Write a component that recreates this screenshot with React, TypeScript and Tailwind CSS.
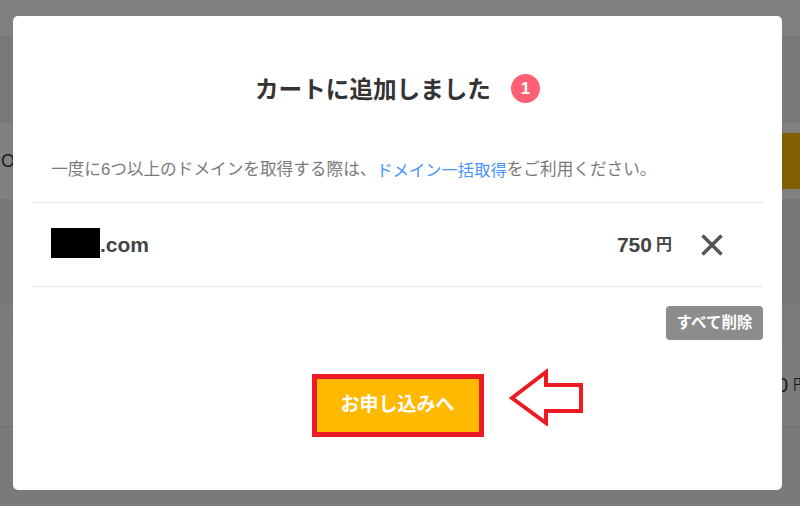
const jp = "font-['Liberation_Sans','Noto_Sans_CJK_JP',sans-serif]";

export default function App() {
  return (
    <div className={`relative h-[506px] w-[800px] overflow-hidden bg-[#7f7f7f] ${jp}`}>
      {/* dimmed page behind the modal */}
      <div className="flex h-full flex-col">
        <div className="h-9 shrink-0 bg-[#808080]" />
        <div className="h-[87px] shrink-0 bg-[#787878]" />
        <div className="flex h-[76px] shrink-0 items-center justify-between bg-[#808080] text-[#0f1a2a]">
          <span className="pl-px text-[18px] leading-none">O</span>
          <div className="h-[56px] w-5 bg-[#7f5f00]" />
        </div>
        <div className="h-[106px] shrink-0 bg-[#777777]" />
        <div className="h-[38px] shrink-0 bg-[#7b7b7b]" />
        <div className="flex h-[84px] shrink-0 items-center justify-end overflow-hidden border-b border-[#707070] bg-[#7c7c7c] text-[#1a1a1a]">
          <span className="-mr-[7px] flex items-center gap-[5px] whitespace-nowrap">
            <span className="text-[20px]">0</span>
            <span className="text-[14px]">円</span>
          </span>
        </div>
        <div className="flex-1 bg-[#7a7a7a]" />
      </div>

      {/* modal */}
      <div className="absolute left-[13px] top-4 flex h-[474px] w-[769px] flex-col rounded-[5px] bg-white px-[19px]">
        <div className="flex items-center justify-center gap-5 pt-[59px]">
          <h2 className="text-[23.6px] font-bold leading-[30px] text-[#333]">カートに追加しました</h2>
          <span className="-mt-[3px] flex h-[29px] w-[29px] items-center justify-center rounded-full bg-[#ff6073] text-[17px] font-bold text-white">1</span>
        </div>

        <p className="mt-[51px] flex h-[29px] items-center pl-[19px] text-[16.65px] text-[#7a7a7a]">
          一度に6つ以上のドメインを取得する際は、<span className="text-[16.3px] text-[#4c94f5]">ドメイン一括取得</span>をご利用ください。
        </p>

        <div className="mt-[17px] flex h-[85px] items-center border-y border-[#e8e8e8] pl-[19px] pr-[40px]">
          <span className="mb-[3px] h-[30px] w-[49px] bg-black" />
          <span className="text-[21px] font-bold text-[#444]">.com</span>
          <span className="ml-auto text-[21px] font-bold text-[#444]">750</span>
          <span className="ml-1 text-[16px] font-bold text-[#444]">円</span>
          <svg className="ml-[29px] h-[22px] w-[22px]" viewBox="0 0 22 22" fill="none" stroke="#555" strokeWidth="3.5">
            <path d="M1.5 1.5l19 19M20.5 1.500l-19 19" />
          </svg>
        </div>

        <div className="mt-[19px] flex justify-end">
          <button className="h-[34px] w-[97px] rounded-[4px] bg-[#8c8c8c] text-[15.5px] font-bold text-white">すべて削除</button>
        </div>

        <div className="relative mt-[34px] flex justify-center">
          <button className="h-[63px] w-[172px] border-[5px] border-[#ed1c24] bg-[#ffb900] text-[19px] font-bold text-white">お申し込みへ</button>
          {/* annotation arrow */}
          <svg className="absolute left-[477px] top-[-8px] h-[60px] w-[76px]" viewBox="0 0 76 60" fill="none" stroke="#ed1c24" strokeWidth="4" strokeLinejoin="miter">
            <path d="M3 32L37 6V19H72V45H37V57Z" />
          </svg>
        </div>
      </div>
    </div>
  );
}
